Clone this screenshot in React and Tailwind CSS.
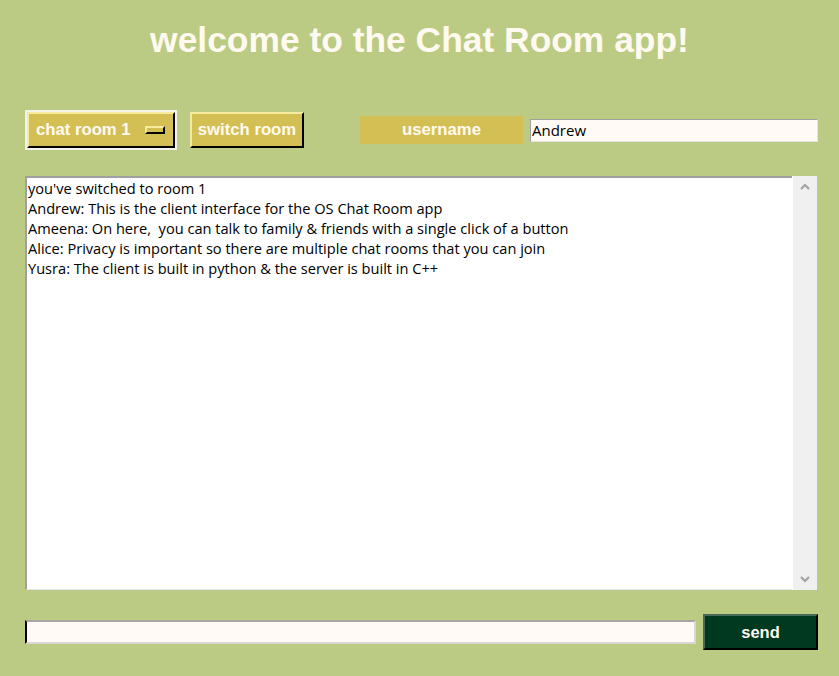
import { useState } from "react";

const messages = [
    "you've switched to room 1",
    "Andrew: This is the client interface for the OS Chat Room app",
    "Ameena: On here,  you can talk to family & friends with a single click of a button",
    "Alice: Privacy is important so there are multiple chat rooms that you can join",
    "Yusra: The client is built in python & the server is built in C++",
];

export default function App() {
    const [username, setUsername] = useState("Andrew");
    const [draft, setDraft] = useState("");

    return (
        <div className="w-[839px] h-[676px] bg-[#bccb84] font-['Liberation_Sans',Arial,sans-serif] overflow-hidden">
            <h1 className="pt-[20px] leading-[40px] text-[35.4px] font-bold text-center text-[#fffaf0]">
                welcome to the Chat Room app!
            </h1>

            {/* controls row */}
            <div className="mt-[50px] h-[40px] flex items-center pl-[25px]">
                <div className="w-[152px] h-[40px] border-2 border-[#f4f2ea]">
                    <div className="h-full flex items-center justify-between bg-[#d4bf55] border-t-2 border-l-2 border-[#f5eba0] border-b-2 border-r-2 border-b-black border-r-black pl-[7px] pr-[8px]">
                        <span className="text-[16.7px] font-bold text-[#fffaf0]">chat room 1</span>
                        <span className="w-[20px] h-[8px] bg-[#d4bf55] border-t-2 border-l-2 border-[#f5eba0] border-b-2 border-r-2 border-b-black border-r-black" />
                    </div>
                </div>
                <button className="ml-[13px] w-[114px] h-[36px] bg-[#d4bf55] border-t-2 border-l-2 border-[#f5eba0] border-b-2 border-r-2 border-b-black border-r-black text-[16.7px] font-bold text-[#fffaf0]">
                    switch room
                </button>
                <div className="ml-[56px] w-[163px] h-[28px] bg-[#d4bf55] flex items-center justify-center text-[16.7px] font-bold text-[#fffaf0]">
                    username
                </div>
                <input
                    className="ml-[7px] w-[288px] h-[23px] bg-[#fffaf5] border border-t-[#a0a0a0] border-l-[#a0a0a0] border-b-[#e3e3e3] border-r-[#e3e3e3] px-[1px] text-[15px] text-black font-['Open_Sans',sans-serif] outline-none"
                    value={username}
                    onChange={e => setUsername(e.target.value)}
                />
            </div>

            {/* message area */}
            <div className="mt-[26px] ml-[25px] w-[792px] h-[414px] flex bg-white">
                <div className="flex-1 border-t-2 border-l-2 border-t-[#a0a0a0] border-l-[#a0a0a0] border-b border-[#e8e8e8] pl-[1px] pt-0 font-['Open_Sans',sans-serif] text-[14.6px] leading-[20px] text-black">
                    {messages.map((m, i) => (
                        <div key={i} className="whitespace-pre">{m}</div>
                    ))}
                </div>
                <div className="w-[24px] ml-[1px] bg-[#f0f0f0] flex flex-col justify-between items-center py-[6px]">
                    <svg width="12" height="8" viewBox="0 0 12 8">
                        <path d="M2 7 L6 3 L10 7" fill="none" stroke="#a3a3a3" strokeWidth="2.2" />
                    </svg>
                    <svg width="12" height="8" viewBox="0 0 12 8">
                        <path d="M2 1 L6 5 L10 1" fill="none" stroke="#a3a3a3" strokeWidth="2.2" />
                    </svg>
                </div>
            </div>

            {/* send row */}
            <div className="mt-[24px] h-[36px] flex items-center pl-[25px]">
                <input
                    className="w-[671px] h-[24px] bg-[#fffaf5] border-t-2 border-l-2 border-t-[#a8a8a0] border-l-[#a8a8a0] border-b-2 border-r-2 border-b-[#d8d8d0] border-r-[#d8d8d0] border-l-black px-[2px] text-[14px] outline-none"
                    value={draft}
                    onChange={e => setDraft(e.target.value)}
                />
                <button className="ml-[7px] w-[115px] h-[36px] bg-[#003820] border-t-2 border-l-2 border-[#4a6a5a] border-b-2 border-r-2 border-b-black border-r-black text-[16.5px] font-bold text-[#fffaf0]">
                    send
                </button>
            </div>
        </div>
    );
}
